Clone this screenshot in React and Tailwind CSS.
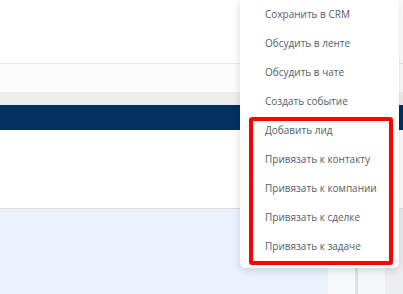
const menuItems = [
  'Сохранить в CRM',
  'Обсудить в ленте',
  'Обсудить в чате',
  'Создать событие',
  'Добавить лид',
  'Привязать к контакту',
  'Привязать к компании',
  'Привязать к сделке',
  'Привязать к задаче',
];

const App = () => {
  return (
    <div
      className="relative w-[403px] h-[294px] overflow-hidden bg-white"
      style={{ fontFamily: '"Open Sans", "Noto Sans", Arial, sans-serif' }}
    >
      {/* Page behind the menu */}
      <div className="flex flex-col h-full">
        <div className="h-[64px] bg-white border-b border-[#e6e6e6]" />
        <div className="h-[28px] bg-[#fcfcfc]" />
        <div className="h-[13px] bg-[#eeeeee]" />
        <div className="h-[25px] bg-[#02305f]" />
        <div className="h-[79px] bg-white border-b border-[#dcdcdc]" />
        <div className="flex flex-1">
          <div className="flex-1 bg-[#ebf2fd]" />
          <div className="w-[27px] bg-[#f8f9fa]" />
          <div className="w-[3px] bg-[#dfe1e4]" />
          <div className="w-[27px] bg-[#f6f7f8]" />
          <div className="w-[18px] bg-[#eceef0]" />
        </div>
      </div>

      {/* Popup menu */}
      <div className="absolute left-[240px] top-0 w-[159px] h-[268px] bg-white rounded-b-md shadow-[0_2px_8px_rgba(0,0,0,0.15)]">
        <ul>
          {menuItems.map((item) => (
            <li
              key={item}
              className="h-[29px] pl-[25px] flex items-center text-[10px] text-[#535c69] whitespace-nowrap"
            >
              {item}
            </li>
          ))}
        </ul>
      </div>

      {/* Red highlight frame */}
      <div className="absolute left-[249px] top-[117px] w-[144px] h-[148px] border-4 border-[#ff0000] rounded-[3px]" />
    </div>
  );
};

export default App;
